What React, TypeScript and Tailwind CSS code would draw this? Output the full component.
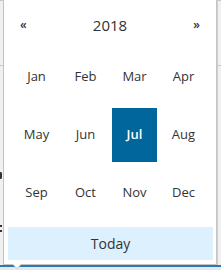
import React from "react";

const months = [
  "Jan",
  "Feb",
  "Mar",
  "Apr",
  "May",
  "Jun",
  "Jul",
  "Aug",
  "Sep",
  "Oct",
  "Nov",
  "Dec",
];

export default function App() {
  const selected = "Jul";

  return (
    <div
      className="relative w-[221px] h-[270px] overflow-hidden bg-[#f0f0f0]"
      style={{ fontFamily: '"Open Sans", "Liberation Sans", sans-serif' }}
    >
      {/* page behind the popup */}
      <div className="absolute left-0 right-0 top-0 h-px bg-[#c8c8c8]" />
      <div className="absolute left-0 right-0 top-[65px] h-px bg-[#c8c8c8]" />
      <div className="absolute right-[3px] top-0 bottom-0 w-px bg-[#d0d0d0]" />
      <div className="absolute left-0 top-[172px] w-[2px] h-[7px] rounded-r-full border-2 border-l-0 border-[#333]" />
      <div className="absolute left-0 top-[225px] w-[2px] h-[2px] bg-[#333]" />
      <div className="absolute left-0 top-[230px] w-[2px] h-[2px] bg-[#333]" />
      <div className="absolute left-0 right-0 top-[265px] h-[5px] bg-[#e8e8e8] border-t-2 border-[#2a7ab8]" />

      {/* datepicker popup */}
      <div className="absolute left-[3px] top-0 w-[214px] h-[265px] bg-white border border-[#c4c4c4] border-t-0 flex flex-col">
        <div className="h-[50px] flex items-center justify-between px-[16px] text-[#333]">
          <span className="text-[12px] font-semibold">«</span>
          <span className="text-[15px]">2018</span>
          <span className="text-[12px] font-semibold">»</span>
        </div>
        <div className="ml-[10px] grid grid-cols-[repeat(4,45px)] auto-rows-[54px] gap-[4px]">
          {months.map((m) => (
            <div
              key={m}
              className={
                m === selected
                  ? "flex items-center justify-center bg-[#00669b] text-white font-semibold text-[13px]"
                  : "flex items-center justify-center text-[#333] text-[13px]"
              }
            >
              {m}
            </div>
          ))}
        </div>
        <div className="mt-[7px] ml-[4px] w-[205px] h-[33px] bg-[#dcf0fd] flex items-center justify-center text-[14px] text-[#333]">
          Today
        </div>

        {/* caret */}
        <div className="absolute left-[8px] bottom-[-5px] w-0 h-0 border-l-[5px] border-r-[5px] border-t-[5px] border-l-transparent border-r-transparent border-t-[#c4c4c4]" />
        <div className="absolute left-[9px] bottom-[-4px] w-0 h-0 border-l-[4px] border-r-[4px] border-t-[4px] border-l-transparent border-r-transparent border-t-white" />
      </div>
    </div>
  );
}
